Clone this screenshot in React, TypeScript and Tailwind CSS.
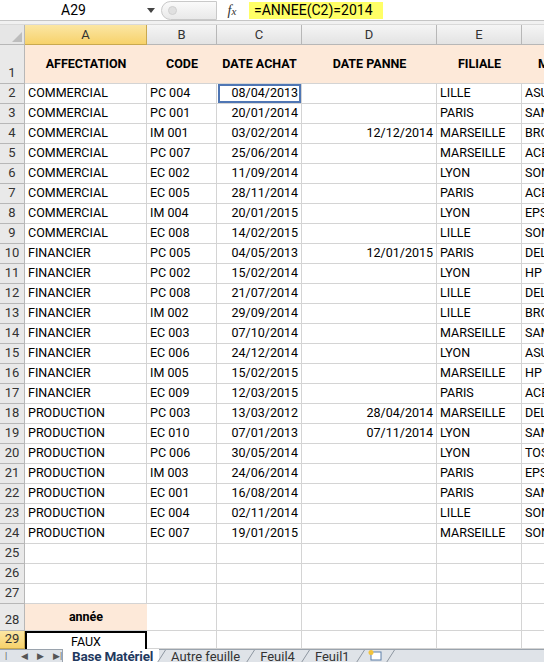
import React from 'react';

type Row = [string, string, string, string, string, string];

const rows: Row[] = [
  ['COMMERCIAL', 'PC 004', '08/04/2013', '', 'LILLE', 'ASUS'],
  ['COMMERCIAL', 'PC 001', '20/01/2014', '', 'PARIS', 'SAMSUNG'],
  ['COMMERCIAL', 'IM 001', '03/02/2014', '12/12/2014', 'MARSEILLE', 'BROTHER'],
  ['COMMERCIAL', 'PC 007', '25/06/2014', '', 'MARSEILLE', 'ACER'],
  ['COMMERCIAL', 'EC 002', '11/09/2014', '', 'LYON', 'SONY'],
  ['COMMERCIAL', 'EC 005', '28/11/2014', '', 'PARIS', 'ACER'],
  ['COMMERCIAL', 'IM 004', '20/01/2015', '', 'LYON', 'EPSON'],
  ['COMMERCIAL', 'EC 008', '14/02/2015', '', 'LILLE', 'SONY'],
  ['FINANCIER', 'PC 005', '04/05/2013', '12/01/2015', 'PARIS', 'DELL'],
  ['FINANCIER', 'PC 002', '15/02/2014', '', 'LYON', 'HP'],
  ['FINANCIER', 'PC 008', '21/07/2014', '', 'LILLE', 'DELL'],
  ['FINANCIER', 'IM 002', '29/09/2014', '', 'LILLE', 'BROTHER'],
  ['FINANCIER', 'EC 003', '07/10/2014', '', 'MARSEILLE', 'SAMSUNG'],
  ['FINANCIER', 'EC 006', '24/12/2014', '', 'LYON', 'ASUS'],
  ['FINANCIER', 'IM 005', '15/02/2015', '', 'MARSEILLE', 'HP'],
  ['FINANCIER', 'EC 009', '12/03/2015', '', 'PARIS', 'ACER'],
  ['PRODUCTION', 'PC 003', '13/03/2012', '28/04/2014', 'MARSEILLE', 'DELL'],
  ['PRODUCTION', 'EC 010', '07/01/2013', '07/11/2014', 'LYON', 'SAMSUNG'],
  ['PRODUCTION', 'PC 006', '30/05/2014', '', 'LYON', 'TOSHIBA'],
  ['PRODUCTION', 'IM 003', '24/06/2014', '', 'PARIS', 'EPSON'],
  ['PRODUCTION', 'EC 001', '16/08/2014', '', 'PARIS', 'SAMSUNG'],
  ['PRODUCTION', 'EC 004', '02/11/2014', '', 'LILLE', 'SONY'],
  ['PRODUCTION', 'EC 007', '19/01/2015', '', 'MARSEILLE', 'SONY'],
];

const cell = 'border-r border-b border-[#d4d4d4] overflow-hidden whitespace-nowrap';
const rowHead =
  'w-[25px] shrink-0 border-r border-b border-[#b7b7b7] bg-[#e9e9e9] text-[#333] text-[13px] flex items-end justify-center pb-[1px]';

function Slant() {
  return (
    <svg width="10" height="14" viewBox="0 0 10 14" className="shrink-0 -mx-[3px]">
      <line x1="0.5" y1="14" x2="9.5" y2="0" stroke="#8d96a0" />
    </svg>
  );
}

function ColHeaders() {
  const cols: [string, string, boolean][] = [
    ['A', 'w-[122px]', true],
    ['B', 'w-[70px]', false],
    ['C', 'w-[85px]', false],
    ['D', 'w-[135px]', false],
    ['E', 'w-[85px]', false],
    ['F', 'w-[100px]', false],
  ];
  return (
    <div className="flex h-[20px] text-[13px]">
      <div className="w-[25px] shrink-0 border-r border-b border-[#b7b7b7] bg-[#e6e6e6] relative">
        <svg className="absolute right-[2px] bottom-[2px]" width="10" height="10" viewBox="0 0 10 10">
          <polygon points="10,0 10,10 0,10" fill="#bdbdbd" />
        </svg>
      </div>
      {cols.map(([l, w, sel]) => (
        <div
          key={l}
          className={`${w} shrink-0 border-r border-b flex items-center justify-center text-[#333] ${
            sel
              ? 'bg-gradient-to-b from-[#fbe6a3] to-[#f7d26a] border-[#c9a94f]'
              : 'bg-gradient-to-b from-[#f5f5f5] to-[#e3e3e3] border-[#b7b7b7]'
          }`}
        >
          {l}
        </div>
      ))}
    </div>
  );
}

export default function App() {
  return (
    <div
      className="w-[544px] h-[662px] overflow-hidden bg-white text-[12.5px] text-black relative"
      style={{ fontFamily: 'Roboto, "Liberation Sans", Arial, sans-serif' }}
    >
      {/* barre de formule */}
      <div className="flex h-[20px] items-center bg-white text-[14px]">
        <div className="w-[145px] text-center pl-[2px]">A29</div>
        <div className="w-[12px] flex justify-center">
          <svg width="8" height="5" viewBox="0 0 8 5">
            <polygon points="0,0 8,0 4,5" fill="#444" />
          </svg>
        </div>
        <div className="ml-[4px] w-[56px] h-[19px] rounded-l-full border border-[#c9c9c9] bg-gradient-to-b from-[#fafafa] to-[#e9e9e9] flex items-center pl-[6px]">
          <div className="w-[9px] h-[9px] rounded-full bg-[#e0e0e0] border border-[#d0d0d0]" />
        </div>
        <div className="w-[30px] text-center italic text-[#333]" style={{ fontFamily: '"Liberation Serif", serif' }}>
          f<span className="text-[11px]">x</span>
        </div>
        <div className="ml-[2px] h-[17px] w-[134px] bg-[#ffff66] flex items-center pl-[5px]">
          =ANNEE(C2)=2014
        </div>
      </div>
      <div className="h-[5px] border-t border-[#c5c5c5] bg-[#f1f1f1] border-b border-b-[#d9d9d9]" />

      <ColHeaders />

      {/* ligne 1 : en-têtes */}
      <div className="flex h-[39px]">
        <div className={rowHead}>1</div>
        {[
          ['AFFECTATION', 'w-[122px]'],
          ['CODE', 'w-[70px]'],
          ['DATE ACHAT', 'w-[85px]'],
          ['DATE PANNE', 'w-[135px]'],
          ['FILIALE', 'w-[85px]'],
          ['MARQUE', 'w-[100px]'],
        ].map(([t, w], i) => (
          <div
            key={t}
            className={`${w} shrink-0 bg-[#fde9d9] border-b border-[#d4d4d4] font-bold flex items-center overflow-hidden whitespace-nowrap ${
              i === 5 ? 'pl-[16px]' : 'justify-center'
            }`}
          >
            {t}
          </div>
        ))}
      </div>

      {rows.map((r, i) => (
        <div key={i} className="flex h-[20px]">
          <div className={rowHead}>{i + 2}</div>
          <div className={`w-[122px] shrink-0 ${cell} pl-[3px] flex items-center`}>{r[0]}</div>
          <div className={`w-[70px] shrink-0 ${cell} pl-[3px] flex items-center`}>{r[1]}</div>
          <div className={`w-[85px] shrink-0 ${cell} pr-[3px] flex items-center justify-end relative`}>
            {r[2]}
            {i === 0 && (
              <div className="absolute left-[1px] top-[0px] right-[0px] bottom-[0px] border-2 border-[#4f76b4]" />
            )}
          </div>
          <div className={`w-[135px] shrink-0 ${cell} pr-[3px] flex items-center justify-end`}>{r[3]}</div>
          <div className={`w-[85px] shrink-0 ${cell} pl-[3px] flex items-center`}>{r[4]}</div>
          <div className={`w-[100px] shrink-0 ${cell} pl-[3px] flex items-center`}>{r[5]}</div>
        </div>
      ))}

      {[25, 26, 27].map((n) => (
        <div key={n} className="flex h-[20px]">
          <div className={rowHead}>{n}</div>
          <div className={`w-[122px] shrink-0 ${cell}`} />
          <div className={`w-[70px] shrink-0 ${cell}`} />
          <div className={`w-[85px] shrink-0 ${cell}`} />
          <div className={`w-[135px] shrink-0 ${cell}`} />
          <div className={`w-[85px] shrink-0 ${cell}`} />
          <div className={`w-[100px] shrink-0 ${cell}`} />
        </div>
      ))}

      {/* ligne 28 */}
      <div className="flex h-[27px]">
        <div className={rowHead}>28</div>
        <div className="w-[122px] shrink-0 bg-[#fde9d9] border-b border-[#d4d4d4] font-bold flex items-center justify-center">
          année
        </div>
        <div className={`w-[70px] shrink-0 ${cell}`} />
        <div className={`w-[85px] shrink-0 ${cell}`} />
        <div className={`w-[135px] shrink-0 ${cell}`} />
        <div className={`w-[85px] shrink-0 ${cell}`} />
        <div className={`w-[100px] shrink-0 ${cell}`} />
      </div>

      {/* ligne 29 */}
      <div className="flex h-[18px]">
        <div className="w-[25px] shrink-0 border-r border-b border-[#c9a94f] bg-gradient-to-b from-[#fbe6a3] to-[#f7d26a] text-[#333] text-[13px] flex items-end justify-center">
          29
        </div>
        <div className="w-[122px] shrink-0 border-2 border-b-0 border-black flex items-start justify-center">FAUX</div>
        <div className={`w-[70px] shrink-0 ${cell}`} />
        <div className={`w-[85px] shrink-0 ${cell}`} />
        <div className={`w-[135px] shrink-0 ${cell}`} />
        <div className={`w-[85px] shrink-0 ${cell}`} />
        <div className={`w-[100px] shrink-0 ${cell}`} />
      </div>

      {/* onglets */}
      <div className="flex h-[14px] border-t border-[#9aa3ad] bg-[#dfe3e8] text-[13.5px] leading-[14px]">
        <div className="w-[62px] shrink-0 flex items-start gap-[9px] pl-[5px] pt-[2px] text-[#555] text-[9px] leading-[9px]">
          <span>|◀</span>
          <span>◀</span>
          <span>▶</span>
          <span>▶|</span>
        </div>
        <div className="bg-white pl-[9px] pr-[6px] font-bold text-[#1f3a5f] -mt-[1px] border-l border-[#9aa3ad] whitespace-nowrap tracking-[-0.2px]">
          Base Matériel
        </div>
        <Slant />
        <div className="px-[8px] text-[#333] whitespace-nowrap text-[13px]">Autre feuille</div>
        <Slant />
        <div className="px-[8px] text-[#333] whitespace-nowrap text-[13px]">Feuil4</div>
        <Slant />
        <div className="px-[8px] text-[#333] whitespace-nowrap text-[13px]">Feuil1</div>
        <Slant />
        <div className="px-[5px] shrink-0">
          <svg width="16" height="12" viewBox="0 0 16 12">
            <rect x="4" y="2" width="10" height="8" fill="#fff" stroke="#5d7fa8" />
            <circle cx="4" cy="2.5" r="2.5" fill="#f3c33c" />
          </svg>
        </div>
        <Slant />
      </div>
    </div>
  );
}
